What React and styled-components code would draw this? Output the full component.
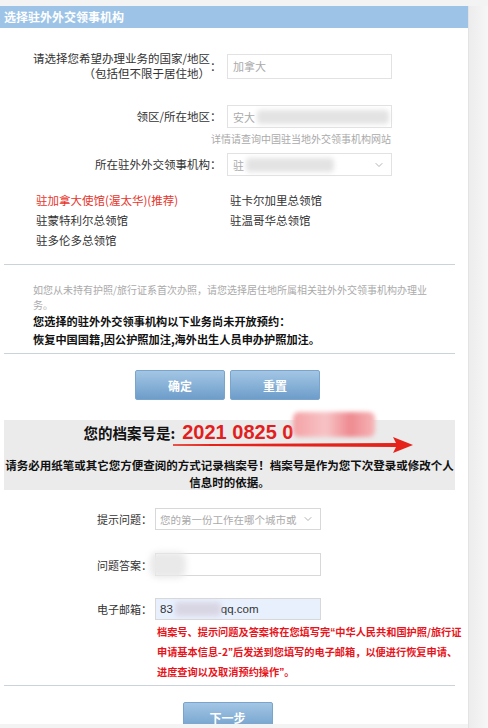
import React from 'react'
import styled, { createGlobalStyle } from 'styled-components'
import { ChevronDown } from 'lucide-react'

const GlobalStyle = createGlobalStyle`
  html, body { margin: 0; padding: 0; background: #f2f2f2; }
  body { font-family: "Noto Sans CJK SC", "Noto Sans", sans-serif; color: #333; }
  * { box-sizing: border-box; }
`

const embassies = [
  { name: '驻加拿大使馆(渥太华)(推荐)', hot: true },
  { name: '驻卡尔加里总领馆' },
  { name: '驻蒙特利尔总领馆' },
  { name: '驻温哥华总领馆' },
  { name: '驻多伦多总领馆' },
]

export default function App() {
  return (
    <Page>
      <GlobalStyle />
      <Main>
        <Header>选择驻外外交领事机构</Header>
        <Content>
          <Row top={23}>
            <Label>
              <LabelText>
                请选择您希望办理业务的国家/地区<br />（包括但不限于居住地）
              </LabelText>
              <Colon>：</Colon>
            </Label>
            <Field h={25}>加拿大</Field>
          </Row>
          <Row top={24}>
            <Label>
              <LabelText>领区/所在地区</LabelText>
              <Colon>：</Colon>
            </Label>
            <Field h={23}>
              安大<Blur w={132} />
            </Field>
          </Row>
          <Tip>详情请查询中国驻当地外交领事机构网站</Tip>
          <Row top={7}>
            <Label>
              <LabelText>所在驻外外交领事机构</LabelText>
              <Colon>：</Colon>
            </Label>
            <Field h={23}>
              驻<Blur w={88} />
              <Chevron><ChevronDown size={12} strokeWidth={1.5} /></Chevron>
            </Field>
          </Row>
          <Links>
            {embassies.map(e => (
              <LinkItem key={e.name} hot={e.hot}>{e.name}</LinkItem>
            ))}
          </Links>
          <Divider top={14} />
          <Notes>
            <GrayNote>
              如您从未持有护照/旅行证系首次办照，请您选择居住地所属相关驻外外交领事机构办理业<br />务。
            </GrayNote>
            <BoldNote>
              您选择的驻外外交领事机构以下业务尚未开放预约：<br />
              恢复中国国籍,因公护照加注,海外出生人员申办护照加注。
            </BoldNote>
          </Notes>
          <Divider top={5} />
          <ButtonGroup>
            <BlueButton>确定</BlueButton>
            <BlueButton>重置</BlueButton>
          </ButtonGroup>
          <ArchiveBox>
            <NumberLine>
              <NumberLabel>您的档案号是:</NumberLabel>
              <NumberValue>2021 0825 0</NumberValue>
              <NumberBlur />
            </NumberLine>
            <Arrow width="240" height="16" viewBox="0 0 240 16">
              <path d="M0 7.3 L224 6 L224 10 L0 8.7 Z" fill="#e5231b" />
              <path d="M220 0 L240 8 L220 16 L224 8 Z" fill="#e5231b" />
            </Arrow>
            <Notice>
              请务必用纸笔或其它您方便查阅的方式记录档案号！档案号是作为您下次登录或修改个人信息时的依据。
            </Notice>
          </ArchiveBox>
          <SmallRow top={18}>
            <SmallLabel>提示问题：</SmallLabel>
            <SmallField h={22}>
              您的第一份工作在哪个城市或
              <Chevron><ChevronDown size={12} strokeWidth={1.5} /></Chevron>
            </SmallField>
          </SmallRow>
          <SmallRow top={23}>
            <SmallLabel>问题答案：</SmallLabel>
            <SmallField h={23}>
              <Smudge />
            </SmallField>
          </SmallRow>
          <SmallRow top={22}>
            <SmallLabel>电子邮箱：</SmallLabel>
            <SmallField h={22} filled>
              <Mail>83</Mail>
              <Blur w={46} tint="#d9d6e4" />
              <Mail>qq.com</Mail>
            </SmallField>
          </SmallRow>
          <RedNote>
            档案号、提示问题及答案将在您填写完<Quote>“</Quote>中华人民共和国护照/旅行证<br />
            申请基本信息-2<Quote>”</Quote>后发送到您填写的电子邮箱，以便进行恢复申请、<br />
            进度查询以及取消预约操作<Quote>”</Quote>。
          </RedNote>
          <Divider top={3} />
          <NextGroup>
            <BlueButton>下一步</BlueButton>
          </NextGroup>
        </Content>
      </Main>
      <SideStrip />
    </Page>
  )
}

const Page = styled.div`
  display: flex;
  width: 488px;
  height: 728px;
  overflow: hidden;
  padding-top: 6px;
  background: #f3f3f3;
`

const Main = styled.div`
  width: 468px;
  height: 718px;
  background: #fff;
  overflow: hidden;
  display: flex;
  flex-direction: column;
`

const SideStrip = styled.div`
  flex: 1;
  border-left: 1px solid #e3e3e3;
  background: linear-gradient(to right, #ececec, #f6f6f6);
`

const Header = styled.div`
  height: 22px;
  line-height: 22px;
  padding-left: 4px;
  background: #9dc4e7;
  color: #fff;
  font-size: 12px;
  font-weight: bold;
`

const Content = styled.div`
  padding: 0 13px 0 4px;
  display: flex;
  flex-direction: column;
`

const Row = styled.div`
  display: flex;
  align-items: center;
  margin-top: ${p => p.top}px;
`

const Label = styled.div`
  width: 214px;
  display: flex;
  justify-content: flex-end;
  align-items: center;
  font-size: 11.5px;
  color: #333;
`

const LabelText = styled.div`
  text-align: right;
  line-height: 15px;
`

const Colon = styled.span`
  width: 8px;
  line-height: 15px;
`

const Field = styled.div`
  position: relative;
  margin-left: 9px;
  width: 165px;
  height: ${p => p.h}px;
  border: 1px solid #e2e2e2;
  background: #fff;
  display: flex;
  align-items: center;
  padding-left: 5px;
  font-size: 11px;
  color: #aaa;
`

const Blur = styled.span`
  display: inline-block;
  width: ${p => p.w}px;
  height: 14px;
  margin-left: 2px;
  border-radius: 4px;
  background: ${p => p.tint || '#e3e3e3'};
  filter: blur(2.5px);
`

const Chevron = styled.span`
  margin-left: auto;
  margin-right: 6px;
  display: flex;
  color: #999;
`

const Tip = styled.div`
  width: 387px;
  margin-top: 4px;
  text-align: right;
  font-size: 10px;
  line-height: 14px;
  color: #aaa;
`

const Links = styled.div`
  margin-top: 14px;
  padding-left: 32px;
  display: grid;
  grid-template-columns: 194px 1fr;
  line-height: 20px;
  font-size: 11.5px;
`

const LinkItem = styled.div`
  color: ${p => (p.hot ? '#e8352b' : '#333')};
`

const Divider = styled.div`
  margin-top: ${p => p.top}px;
  height: 1px;
  background: #cbd3da;
`

const Notes = styled.div`
  padding-left: 29px;
  margin-top: 17px;
`

const GrayNote = styled.div`
  font-size: 10px;
  line-height: 15px;
  color: #aaa;
  white-space: nowrap;
`

const BoldNote = styled.div`
  font-size: 11.2px;
  line-height: 18px;
  font-weight: bold;
  color: #111;
`

const ButtonGroup = styled.div`
  margin-top: 16px;
  padding-right: 4px;
  display: flex;
  justify-content: center;
  gap: 5px;
`

const BlueButton = styled.div`
  width: 90px;
  height: 30px;
  border: 1px solid #79a5cd;
  border-radius: 2px;
  background: linear-gradient(#a3c6e4, #6d9dca);
  color: #fff;
  font-size: 12px;
  font-weight: bold;
  display: flex;
  align-items: center;
  justify-content: center;
`

const ArchiveBox = styled.div`
  position: relative;
  margin-top: 20px;
  padding-top: 1px;
  background: #ebebeb;
`

const NumberLine = styled.div`
  height: 22px;
  display: flex;
  justify-content: center;
  align-items: baseline;
  line-height: 22px;
`

const NumberLabel = styled.span`
  font-size: 14.5px;
  font-weight: bold;
  color: #111;
`

const NumberValue = styled.span`
  margin-left: 7px;
  font-family: "Liberation Sans", Arial, sans-serif;
  font-size: 20px;
  font-weight: bold;
  color: #e21e1e;
`

const NumberBlur = styled.span`
  align-self: flex-start;
  margin-top: -9px;
  width: 82px;
  height: 25px;
  background: linear-gradient(to right, #f4a3a6, #f7c4c6 40%, #ee8a90 70%, #f6b6b8);
  border-radius: 6px;
  filter: blur(2px);
`

const Arrow = styled.svg`
  position: absolute;
  left: 169px;
  top: 17px;
`

const Notice = styled.div`
  margin-top: 14px;
  text-align: center;
  font-size: 11.5px;
  line-height: 16.5px;
  font-weight: bold;
  color: #111;
`

const SmallRow = styled.div`
  display: flex;
  align-items: center;
  margin-top: ${p => p.top}px;
`

const SmallLabel = styled.div`
  width: 148px;
  text-align: right;
  font-size: 11px;
  color: #333;
`

const SmallField = styled.div`
  position: relative;
  margin-left: 3px;
  width: 166px;
  height: ${p => p.h}px;
  border: 1px solid #d8d8d8;
  background: ${p => (p.filled ? '#e8f0fe' : '#fff')};
  display: flex;
  align-items: center;
  padding-left: 4px;
  font-size: 10.5px;
  color: #aaa;
`

const Smudge = styled.span`
  position: absolute;
  left: -6px;
  top: -2px;
  width: 36px;
  height: 26px;
  background: #e9e9e9;
  border-radius: 8px;
  filter: blur(3px);
`

const Mail = styled.span`
  font-family: "Liberation Sans", Arial, sans-serif;
  font-size: 11.5px;
  color: #333;
`

const RedNote = styled.div`
  margin-left: 153px;
  margin-top: 2px;
  font-size: 10.2px;
  line-height: 19px;
  font-weight: bold;
  color: #e8141b;
  white-space: nowrap;
`

const Quote = styled.span`
  font-family: "Liberation Sans", Arial, sans-serif;
`

const NextGroup = styled.div`
  margin-top: 16px;
  padding-right: 4px;
  display: flex;
  justify-content: center;
`
